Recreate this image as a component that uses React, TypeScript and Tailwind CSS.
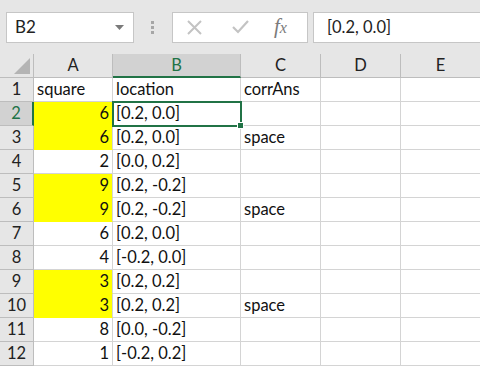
import React from "react";

type Row = { a: string; b: string; c: string; yellow?: boolean };

const rows: Row[] = [
  { a: "square", b: "location", c: "corrAns" },
  { a: "6", b: "[0.2, 0.0]", c: "", yellow: true },
  { a: "6", b: "[0.2, 0.0]", c: "space", yellow: true },
  { a: "2", b: "[0.0, 0.2]", c: "" },
  { a: "9", b: "[0.2, -0.2]", c: "", yellow: true },
  { a: "9", b: "[0.2, -0.2]", c: "space", yellow: true },
  { a: "6", b: "[0.2, 0.0]", c: "" },
  { a: "4", b: "[-0.2, 0.0]", c: "" },
  { a: "3", b: "[0.2, 0.2]", c: "", yellow: true },
  { a: "3", b: "[0.2, 0.2]", c: "space", yellow: true },
  { a: "8", b: "[0.0, -0.2]", c: "" },
  { a: "1", b: "[-0.2, 0.2]", c: "" },
];

const cols = ["A", "B", "C", "D", "E"];

function Toolbar() {
  return (
    <div className="flex h-[54px] items-center bg-[#e6e6e6] pl-[6px]">
      <div className="flex h-[31px] w-[128px] items-center justify-between border border-[#c6c6c6] bg-white pl-[8px] pr-[9px] text-[17px] text-[#222]">
        <span>B2</span>
        <svg width="9" height="5" viewBox="0 0 9 5">
          <path d="M0 0h9L4.5 5z" fill="#7a7a7a" />
        </svg>
      </div>
      <div className="ml-[17px] flex w-[5px] flex-col gap-[2px]">
        <div className="h-[3px] w-[3px] bg-[#a6a6a6]" />
        <div className="h-[3px] w-[3px] bg-[#a6a6a6]" />
        <div className="h-[3px] w-[3px] bg-[#a6a6a6]" />
      </div>
      <div className="ml-[16px] flex h-[31px] w-[136px] items-center border border-[#c6c6c6] bg-white">
        <svg className="ml-[14px]" width="15" height="15" viewBox="0 0 15 15">
          <path d="M1 1l13 13M14 1L1 14" stroke="#c3c3c3" strokeWidth="2" />
        </svg>
        <svg className="ml-[30px]" width="17" height="14" viewBox="0 0 17 14">
          <path d="M1 7l5 5L16 1" stroke="#c3c3c3" strokeWidth="2.2" fill="none" />
        </svg>
        <span className="ml-[25px] font-['Liberation_Serif'] text-[21px] italic text-[#7b7b7b]">
          f<span className="text-[16px]">x</span>
        </span>
      </div>
      <div className="ml-[5px] flex h-[31px] flex-1 items-center border border-r-0 border-[#c6c6c6] bg-white pl-[13px] text-[16.5px] text-[#222]">
        [0.2, 0.0]
      </div>
    </div>
  );
}

export default function App() {
  return (
    <div className="h-[367px] w-[480px] overflow-hidden bg-white font-['Lato'] text-[#111]">
      <Toolbar />
      <div className="grid grid-cols-[34px_79px_128px_80px_80px_80px] text-[16.5px]">
        <div className="relative h-[24px] border-b border-r border-[#bdbdbd] bg-[#e6e6e6]">
          <svg className="absolute bottom-[3px] right-[3px]" width="16" height="16" viewBox="0 0 16 16">
            <path d="M16 0v16H0z" fill="#b4b4b4" />
          </svg>
        </div>
        {cols.map((c) => (
          <div
            key={c}
            className={
              c === "B"
                ? "flex h-[24px] items-center justify-center border-b-2 border-r border-b-[#217346] border-r-[#bdbdbd] bg-[#d2d2d2] pt-[1px] text-[#217346]"
                : "flex h-[24px] items-center justify-center border-b border-r border-[#bdbdbd] bg-[#e6e6e6] text-[#222]"
            }
          >
            {c}
          </div>
        ))}
        {rows.map((r, i) => {
          const n = i + 1;
          const sel = n === 2;
          return (
            <React.Fragment key={n}>
              <div
                className={
                  sel
                    ? "flex h-[24px] items-center justify-center border-b border-r-2 border-b-[#bdbdbd] border-r-[#217346] bg-[#d2d2d2] text-[#217346]"
                    : "flex h-[24px] items-center justify-center border-b border-r border-[#bdbdbd] bg-[#e6e6e6] text-[#222]"
                }
              >
                {n}
              </div>
              <div
                className={
                  r.yellow
                    ? "flex h-[24px] items-center justify-end border-b border-r border-b-[#ffff00] border-r-[#d4d4d4] bg-[#ffff00] pr-[3px]"
                    : n === 1
                    ? "flex h-[24px] items-center border-b border-r border-[#d4d4d4] pl-[3px]"
                    : "flex h-[24px] items-center justify-end border-b border-r border-[#d4d4d4] pr-[3px]"
                }
              >
                {r.a}
              </div>
              <div
                className={
                  sel
                    ? "relative flex h-[24px] items-center border-b border-r border-[#d4d4d4] pl-[3px] outline outline-2 -outline-offset-1 outline-[#217346]"
                    : "flex h-[24px] items-center border-b border-r border-[#d4d4d4] pl-[3px]"
                }
              >
                {r.b}
                {sel && (
                  <div className="absolute -bottom-[4px] -right-[4px] h-[7px] w-[7px] border border-white bg-[#217346]" />
                )}
              </div>
              <div className="flex h-[24px] items-center border-b border-r border-[#d4d4d4] pl-[3px]">
                {r.c}
              </div>
              <div className="h-[24px] border-b border-r border-[#d4d4d4]" />
              <div className="h-[24px] border-b border-r border-[#d4d4d4]" />
            </React.Fragment>
          );
        })}
      </div>
    </div>
  );
}
